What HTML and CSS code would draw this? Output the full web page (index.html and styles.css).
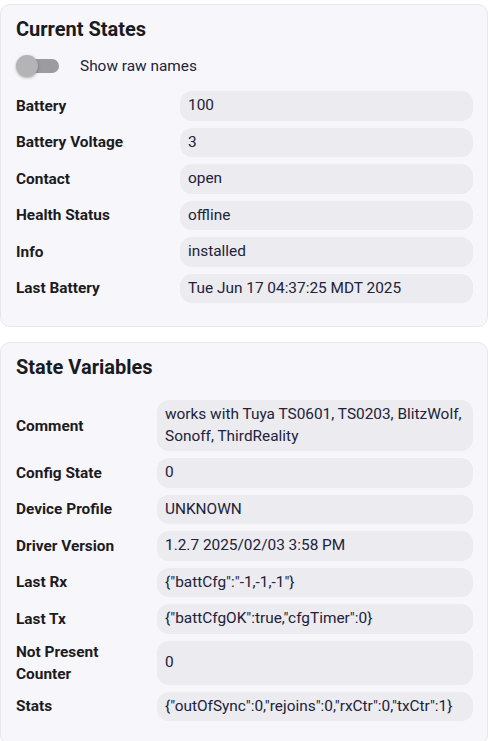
FILE: index.html
```html
<!DOCTYPE html>
<html lang="en">
<head>
<meta charset="utf-8">
<title>Device States</title>
<link rel="stylesheet" href="styles.css">
</head>
<body>
<section class="card card-states">
  <h2 class="card-title">Current States</h2>
  <div class="toggle-row">
    <span class="switch"><span class="switch-track"></span><span class="switch-knob"></span></span>
    <span class="toggle-label">Show raw names</span>
  </div>
  <div class="grid grid-wide">
    <div class="label">Battery</div><div class="value">100</div>
    <div class="label">Battery Voltage</div><div class="value">3</div>
    <div class="label">Contact</div><div class="value">open</div>
    <div class="label">Health Status</div><div class="value">offline</div>
    <div class="label">Info</div><div class="value">installed</div>
    <div class="label">Last Battery</div><div class="value">Tue Jun 17 04:37:25 MDT 2025</div>
  </div>
</section>
<section class="card card-vars">
  <h2 class="card-title">State Variables</h2>
  <div class="grid grid-narrow">
    <div class="label">Comment</div><div class="value">works with Tuya TS0601, TS0203, BlitzWolf, Sonoff, ThirdReality</div>
    <div class="label">Config State</div><div class="value">0</div>
    <div class="label">Device Profile</div><div class="value">UNKNOWN</div>
    <div class="label">Driver Version</div><div class="value">1.2.7 2025/02/03 3:58 PM</div>
    <div class="label">Last Rx</div><div class="value">{"battCfg":"-1,-1,-1"}</div>
    <div class="label">Last Tx</div><div class="value">{"battCfgOK":true,"cfgTimer":0}</div>
    <div class="label">Not Present Counter</div><div class="value">0</div>
    <div class="label">Stats</div><div class="value">{"outOfSync":0,"rejoins":0,"rxCtr":0,"txCtr":1}</div>
  </div>
</section>
</body>
</html>
```
FILE: styles.css
```css
html, body {
  margin: 0;
  padding: 0;
  background: #ffffff;
}
body {
  font-family: Roboto, "Noto Sans", sans-serif;
  color: #1c1b22;
  padding-top: 4px;
}
.card {
  background: #f7f7fb;
  border: 1px solid #e7e7eb;
  border-radius: 10px;
  padding: 12px 14px 23px 15px;
}
.card-vars {
  margin-top: 15px;
}
.card-title {
  margin: 0;
  font-size: 20px;
  line-height: 24px;
  font-weight: 700;
  color: #1a1a22;
}
.card-states .card-title {
  margin-bottom: 13px;
}
.card-vars .card-title {
  margin-bottom: 21px;
}
.toggle-row {
  display: flex;
  align-items: center;
  height: 24px;
  margin-bottom: 13px;
}
.switch {
  position: relative;
  width: 44px;
  height: 24px;
  flex: none;
}
.switch-track {
  position: absolute;
  left: 6px;
  right: 1px;
  top: 5px;
  height: 14px;
  border-radius: 7px;
  background: #9c9c9f;
}
.switch-knob {
  position: absolute;
  left: 0;
  top: 1px;
  width: 22px;
  height: 22px;
  border-radius: 50%;
  background: #b4b4b6;
  box-shadow: 0 1px 3px rgba(0, 0, 0, 0.3);
}
.toggle-label {
  margin-left: 20px;
  font-size: 15.4px;
  color: #22223a;
}
.grid {
  display: grid;
  column-gap: 8px;
  row-gap: 7px;
  align-items: center;
}
.grid-wide {
  grid-template-columns: 156px 1fr;
}
.grid-narrow {
  grid-template-columns: 133px 1fr;
}
.label {
  font-size: 15.4px;
  font-weight: 700;
  line-height: 22px;
  color: #1c1b22;
}
.value {
  align-self: stretch;
  display: flex;
  align-items: center;
  background: #ebebf0;
  border-radius: 12px;
  padding: 4px 8px;
  font-size: 15.4px;
  line-height: 21.5px;
  color: #22223a;
}
```
